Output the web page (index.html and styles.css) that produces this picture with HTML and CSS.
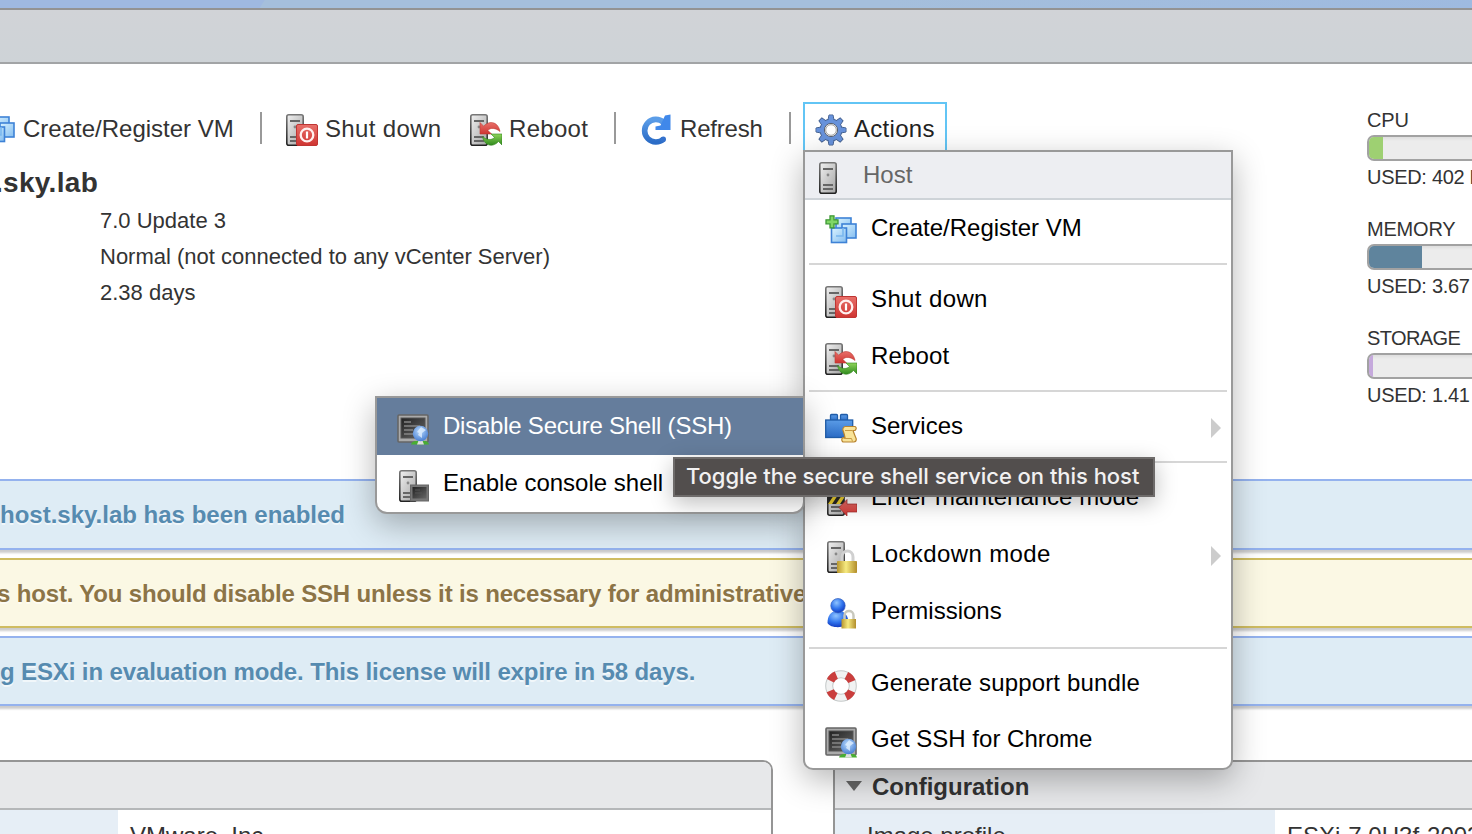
FILE: index.html
```html
<!DOCTYPE html>
<html lang="en">
<head>
<meta charset="utf-8">
<title>Host client</title>
<link rel="stylesheet" href="styles.css">
</head>
<body>
<svg class="defs" width="0" height="0" aria-hidden="true">
  <defs>
    <linearGradient id="metal" x1="0" y1="0" x2="1" y2="1"><stop offset="0" stop-color="#f0f0f0"/><stop offset="1" stop-color="#a4a4a4"/></linearGradient>
    <linearGradient id="edge" x1="0" y1="0" x2="0" y2="1"><stop offset="0" stop-color="#777"/><stop offset="1" stop-color="#222"/></linearGradient>
    <linearGradient id="red" x1="0" y1="0" x2="0" y2="1"><stop offset="0" stop-color="#e8706a"/><stop offset="1" stop-color="#cf3431"/></linearGradient>
    <linearGradient id="green" x1="0" y1="0" x2="0" y2="1"><stop offset="0" stop-color="#8fd45a"/><stop offset="1" stop-color="#2f8a1d"/></linearGradient>
    <linearGradient id="sky" x1="0" y1="0" x2="1" y2="1"><stop offset="0" stop-color="#d9f3ff"/><stop offset="1" stop-color="#84bdf0"/></linearGradient>
    <linearGradient id="blue" x1="0" y1="0" x2="0" y2="1"><stop offset="0" stop-color="#5b9de8"/><stop offset="1" stop-color="#2b6cc6"/></linearGradient>
    <linearGradient id="gold" x1="0" y1="0" x2="1" y2="0"><stop offset="0" stop-color="#b8962e"/><stop offset=".45" stop-color="#f6ea80"/><stop offset="1" stop-color="#b28d2b"/></linearGradient>
    <linearGradient id="screen" x1="0" y1="0" x2="1" y2="1"><stop offset="0" stop-color="#222"/><stop offset="1" stop-color="#666"/></linearGradient>
    <radialGradient id="person" cx=".4" cy=".3" r=".8"><stop offset="0" stop-color="#8fc4ff"/><stop offset=".5" stop-color="#3276ee"/><stop offset="1" stop-color="#092bb5"/></radialGradient>
    <radialGradient id="globe" cx=".45" cy=".35" r=".7"><stop offset="0" stop-color="#b9dafd"/><stop offset="1" stop-color="#3f78cf"/></radialGradient>

    <symbol id="tower" viewBox="0 0 18 32">
      <rect x=".8" y=".8" width="16.4" height="30.4" rx="2" fill="url(#metal)" stroke="url(#edge)" stroke-width="1.6"/>
      <path d="M4 7h10M4 23h10M4 27h10" stroke="#666" stroke-width="1.8"/>
      <circle cx="9" cy="13" r="1.4" fill="#888"/>
    </symbol>
    <symbol id="create" viewBox="0 0 32 32">
      <g fill="url(#sky)" stroke="#3e82d6" stroke-width="1.6">
        <rect x="11" y="3" width="15" height="15"/>
        <rect x="17" y="9" width="14" height="14"/>
        <rect x="6.500" y="13" width="15" height="14.500"/>
      </g>
      <path d="M18 13v8h-7" fill="none" stroke="#78b6ee" stroke-width="1.500"/>
      <path d="M5 .8h4v4h4v4H9v4H5v-4H1v-4h4z" fill="#80d765" stroke="#3d9834" stroke-width="1.3"/>
    </symbol>
    <symbol id="shutdown" viewBox="0 0 32 32">
      <use href="#tower" x="0" y="0" width="18" height="32"/>
      <rect x="10.500" y="10.500" width="21" height="21" rx="1.500" fill="url(#red)" stroke="#bf3533"/>
      <circle cx="21" cy="21" r="6.300" fill="none" stroke="#fff0ef" stroke-width="2.300"/>
      <path d="M21 17.500v7" stroke="#fff" stroke-width="2.200"/>
    </symbol>
    <symbol id="reboot" viewBox="0 0 32 32">
      <use href="#tower" x="0" y="0" width="18" height="32"/>
      <path d="M10 8.500V20h11.500l-3.700-3.700c3-3 8-2.300 12.200 1.200C28.500 8.500 20 5.500 13.700 12.200z" fill="url(#red)" stroke="#bd3a32" stroke-width=".6"/>
      <path d="M32 31V20H21l3.500 3.500c-3 3-8 2.500-12-1C14 31 22 34.500 28.500 27.500z" fill="url(#green)" stroke="#32841f" stroke-width=".6"/>
    </symbol>
    <symbol id="refresh" viewBox="0 0 32 32">
      <path d="M23.500 8.300A11.300 11.300 0 1 0 23.600 25" fill="none" stroke="url(#blue)" stroke-width="5.600"/>
      <circle cx="23.300" cy="25.200" r="2.700" fill="#3472cd"/>
      <path d="M25 1.500l5.500-1V16h-15v-3.500l5-1z" fill="#4088ea"/>
    </symbol>
    <symbol id="gear" viewBox="0 0 32 32">
      <g fill="#6792db" stroke="#45618f" stroke-width="1">
        <path id="teeth" d="M13 6l1-5h4l1 5v20l-1 5h-4l-1-5z"/>
        <use href="#teeth" transform="rotate(45 16 16)"/>
        <use href="#teeth" transform="rotate(90 16 16)"/>
        <use href="#teeth" transform="rotate(135 16 16)"/>
        <circle cx="16" cy="16" r="11"/>
      </g>
      <g fill="#6792db">
        <path id="core" d="M13.500 6l.9-4.500h3.200l.9 4.500v20l-.9 4.500h-3.200l-.9-4.500z"/>
        <use href="#core" transform="rotate(45 16 16)"/>
        <use href="#core" transform="rotate(90 16 16)"/>
        <use href="#core" transform="rotate(135 16 16)"/>
      </g>
      <circle cx="16" cy="16" r="6.600" fill="#fff" stroke="#5b6270" stroke-width="1"/>
      <circle cx="16" cy="16" r="5.300" fill="#fff" stroke="#8b8b8b" stroke-width=".8"/>
    </symbol>
    <symbol id="services" viewBox="0 0 32 32">
      <g fill="url(#blue)" stroke="#205da9" stroke-width="1.300">
        <path d="M5.500 8V2.500q0-1 1-1h5q1 0 1 1V8M15.500 8V2.500q0-1 1-1h5q1 0 1 1V8"/>
        <rect x=".7" y="7" width="27" height="17.500"/>
      </g>
      <path d="M20 13.500h10q2.500 1.500 0 4h-2q1 3 3.300 8.500 0 3-2.500 3H18q-2.500-2.500 0-4.500h2q-.5-3-2.300-8 .3-2.500 2.300-3z" fill="#f9e397" stroke="#b88430" stroke-width="1.200"/>
      <path d="M20 17.500h7M18.500 25.500h8l1 3" fill="none" stroke="#c99a42"/>
    </symbol>
    <symbol id="maintenance" viewBox="0 0 32 32">
      <use href="#tower" x="2" y="0" width="18" height="32"/>
      <path d="M2 8h17v12H2z" fill="#292929"/>
      <path d="M3 20l8-12h4L7 20zm8 0l8-12v6l-4 6z" fill="#f1d331"/>
      <path d="M14 23.500l8-8v4.500h10v8H22v4z" fill="url(#red)" stroke="#9d2929" stroke-width=".7"/>
    </symbol>
    <symbol id="lockdown" viewBox="0 0 32 32">
      <use href="#tower" x="2" y="0" width="18" height="32"/>
      <path d="M17 21v-5c0-8 11-8 11 0v5" fill="none" stroke="#d0d0d0" stroke-width="3"/>
      <rect x="12" y="20" width="20" height="12" rx=".8" fill="url(#gold)"/>
    </symbol>
    <symbol id="permissions" viewBox="0 0 32 32">
      <path d="M2.500 25c0-7 3-11 8-12h5c5 1 8 6 8 12-2 5-18 6-21 0z" fill="url(#person)"/>
      <circle cx="13" cy="7.700" r="7.200" fill="url(#person)" stroke="#3761bd" stroke-width=".7"/>
      <path d="M19.500 22v-4.500c0-6 9-6 9 0V22" fill="none" stroke="#c8c8bd" stroke-width="2.500"/>
      <rect x="16.500" y="21" width="14.500" height="9.500" fill="url(#gold)"/>
    </symbol>
    <symbol id="buoy" viewBox="0 0 32 32">
      <circle cx="16" cy="16" r="11.800" fill="none" stroke="#c5c9c9" stroke-width="8"/>
      <circle cx="16" cy="16" r="11.800" fill="none" stroke="#f1f2f2" stroke-width="6"/>
      <circle cx="16" cy="16" r="11.800" fill="none" stroke="#ca3e3d" stroke-width="7.800" stroke-dasharray="8.200 10.335" stroke-dashoffset="-5.200"/>
    </symbol>
    <symbol id="ssh" viewBox="0 0 32 32">
      <rect x="1" y="2" width="30" height="27" rx="1" fill="#aaa" stroke="#666" stroke-width="1.600"/>
      <rect x="4" y="5" width="24" height="20" fill="url(#screen)" stroke="#555"/>
      <path d="M7 9h7M7 13h16M7 17h9M7 21h10" stroke="#858585" stroke-width="1.600"/>
      <path d="M14 31.500q1-4 6-3.500h7q4-.5 5 3.500z" fill="#48ad32"/>
      <path d="M20 31.500l2-5h3l2 5z" fill="#ddd"/>
      <circle cx="23.500" cy="20.500" r="7.700" fill="url(#globe)"/>
      <path d="M24 14l-4 5 2 1-1 2 4 3v-5l4-3z" fill="#e4f2ff" opacity=".75"/>
    </symbol>
    <symbol id="console" viewBox="0 0 32 32">
      <use href="#tower" x="2" y="0" width="18" height="32"/>
      <rect x="13.500" y="15" width="18" height="16" fill="#777" stroke="#666"/>
      <rect x="15.500" y="17" width="14" height="11.500" fill="url(#screen)"/>
      <path d="M18 20h5M18 23h7" stroke="#555"/>
    </symbol>
  </defs>
</svg>

<div class="page">
  <div class="masthead"></div>
  <div class="tabbar"></div>

  <div class="summary">
    <div class="summary-main">
      <div class="toolbar">
        <div class="tool tool-create"><svg class="icon"><use href="#create"/></svg><span>Create/Register VM</span></div>
        <div class="divider"></div>
        <div class="tool tool-shutdown"><svg class="icon"><use href="#shutdown"/></svg><span>Shut down</span></div>
        <div class="tool tool-reboot"><svg class="icon"><use href="#reboot"/></svg><span>Reboot</span></div>
        <div class="divider"></div>
        <div class="tool tool-refresh"><svg class="icon"><use href="#refresh"/></svg><span>Refresh</span></div>
        <div class="divider"></div>
        <div class="tool tool-actions"><svg class="icon"><use href="#gear"/></svg><span>Actions</span></div>
      </div>
      <h1 class="host-name">.sky.lab</h1>
      <div class="facts">
        <div class="fact"><span>7.0 Update 3</span></div>
        <div class="fact"><span>Normal (not connected to any vCenter Server)</span></div>
        <div class="fact"><span>2.38 days</span></div>
      </div>
    </div>
    <div class="meters">
      <div class="meter"><div class="meter-text">CPU</div><div class="track"><div class="fill fill-cpu"></div></div><div class="meter-text used">USED: 402 MHz</div></div>
      <div class="meter"><div class="meter-text">MEMORY</div><div class="track"><div class="fill fill-memory"></div></div><div class="meter-text used">USED: 3.67 GB</div></div>
      <div class="meter"><div class="meter-text label-storage">STORAGE</div><div class="track"><div class="fill fill-storage"></div></div><div class="meter-text used">USED: 1.41 GB</div></div>
    </div>
  </div>

  <div class="alerts">
    <div class="alert info"><span class="alert-enabled">host.sky.lab has been enabled</span></div>
    <div class="alert warning"><span class="alert-ssh">s host. You should disable SSH unless it is necessary for administrative</span></div>
    <div class="alert info"><span class="alert-license">g ESXi in evaluation mode. This license will expire in 58 days.</span></div>
  </div>

  <div class="panels">
    <div class="panel panel-hardware">
      <div class="panel-head"></div>
      <div class="row"><div class="key"></div><div class="value">VMware, Inc.</div></div>
    </div>
    <div class="panel panel-config">
      <div class="panel-head"><svg class="caret" viewBox="0 0 16 10"><path d="M0 0h16L8 10z" fill="#666"/></svg><span>Configuration</span></div>
      <div class="row"><div class="key">Image profile</div><div class="value">ESXi-7.0U3f-20036589-standard</div></div>
    </div>
  </div>

  <div class="menu">
    <div class="menu-head"><svg class="host-icon"><use href="#tower"/></svg><span>Host</span></div>
    <div class="group"><div class="item"><svg class="icon"><use href="#create"/></svg><span>Create/Register VM</span></div></div>
    <div class="group">
      <div class="item"><svg class="icon"><use href="#shutdown"/></svg><span class="loose">Shut down</span></div>
      <div class="item"><svg class="icon"><use href="#reboot"/></svg><span class="support">Reboot</span></div>
    </div>
    <div class="group group-services"><div class="item"><svg class="icon"><use href="#services"/></svg><span>Services</span><i class="more"></i></div></div>
    <div class="group">
      <div class="item"><svg class="icon"><use href="#maintenance"/></svg><span>Enter maintenance mode</span></div>
      <div class="item"><svg class="icon"><use href="#lockdown"/></svg><span class="loose">Lockdown mode</span><i class="more"></i></div>
      <div class="item"><svg class="icon"><use href="#permissions"/></svg><span>Permissions</span></div>
    </div>
    <div class="group group-support">
      <div class="item"><svg class="icon"><use href="#buoy"/></svg><span class="support">Generate support bundle</span></div>
      <div class="item"><svg class="icon"><use href="#ssh"/></svg><span>Get SSH for Chrome</span></div>
    </div>
  </div>

  <div class="submenu">
    <div class="item selected"><svg class="icon"><use href="#ssh"/></svg><span>Disable Secure Shell (SSH)</span></div>
    <div class="item"><svg class="icon"><use href="#console"/></svg><span>Enable console shell</span></div>
  </div>

  <div class="tooltip">Toggle the secure shell service on this host</div>
</div>
</body>
</html>
```
FILE: styles.css
```css
* { box-sizing: border-box; }
body { margin: 0; background: #fff; }
.defs { display: block; position: absolute; }
.page {
  position: relative; width: 1472px; height: 834px; overflow: hidden;
  font-family: "Liberation Sans", Arial, sans-serif; font-size: 24px; color: #333; white-space: nowrap;
}
.masthead { height: 8px; background: linear-gradient(122deg, #9fb9e1 0 224px, #a5bfdc 225px 60%, #9ebae0); }
.tabbar { height: 56px; border-top: 2px solid #939393; border-bottom: 2px solid #a2a4a6; background: linear-gradient(#d1d3d7, #ced3d7); }
.icon { width: 32px; height: 32px; flex: none; display: block; }

.summary { display: flex; height: 415px; }
.summary-main { width: 1367px; flex: none; padding-top: 38px; }
.toolbar { display: flex; align-items: center; height: 54px; }
.tool { display: flex; align-items: center; flex: none; }
.tool .icon { position: relative; top: 1px; }
.tool-create { width: 277px; margin-left: -17px; gap: 8px; }
.tool-shutdown { width: 184px; margin-left: 24px; gap: 7px; letter-spacing: .35px; }
.tool-reboot { width: 144px; gap: 7px; letter-spacing: .3px; }
.tool-refresh { width: 149px; margin-left: 24px; gap: 8px; letter-spacing: -.2px; }
.tool-actions { width: 144px; height: 54px; margin-left: 12px; padding-left: 10px; gap: 7px; border: 2px solid #62c5f5; color: #222; letter-spacing: .3px; }
.divider { width: 2px; height: 32px; flex: none; background: #999; position: relative; top: -1px; }
.host-name { margin: 9px 0 0 -5px; height: 36px; line-height: 36px; font-size: 28px; font-weight: bold; letter-spacing: .3px; }
.facts { margin-top: 2px; padding-left: 100px; font-size: 22px; line-height: 36px; }
.fact { height: 36px; }

.meters { width: 105px; flex: none; padding-top: 45px; font-size: 20px; overflow: hidden; }
.meter { height: 109px; }
.meter-text { height: 22px; line-height: 22px; letter-spacing: -.2px; }
.used { letter-spacing: -.3px; }
.label-storage { letter-spacing: -.6px; }
.track { width: 240px; height: 26px; margin: 4px 0 5px; border: 2px solid #a2a2a2; border-radius: 7px; background: #ececec; overflow: hidden; box-shadow: inset 0 2px 3px rgba(0,0,0,.06); }
.fill { height: 100%; }
.fill-cpu { width: 14px; background: #9ed072; }
.fill-memory { width: 53px; background: #5f849d; }
.fill-storage { width: 4px; background: #c5a9dc; }

.alerts { display: flex; flex-direction: column; gap: 8px; margin: 0 -4px; font-weight: bold; }
.alert { height: 70px; padding: 2px 4px 0; line-height: 64px; border: 2px solid; box-shadow: 0 3px 2px rgba(0,0,0,.2); text-shadow: 0 2px 0 rgba(255,255,255,.6); }
.alert:first-child { height: 71px; }
.info { background: #deecf5; border-color: #94b2ee; color: #568bb0; }
.warning { background: #fbf8e4; border-color: #cfbc61; color: #8c7446; }
.alert span { display: block; }
.alert-enabled { margin-left: -2px; }
.alert-ssh { margin-left: -5px; letter-spacing: -.16px; }
.alert-license { margin-left: -2px; letter-spacing: -.12px; }

.panels { display: flex; gap: 60px; margin: 54px 0 0 -20px; }
.panel { flex: none; height: 120px; border: 2px solid #959595; border-radius: 10px; background: #fff; overflow: hidden; }
.panel-hardware { width: 793px; }
.panel-config { width: 700px; }
.panel-head { display: flex; align-items: center; height: 48px; border-bottom: 2px solid #b5b7b9; background: #e7e8ea; font-weight: bold; padding: 4px 0 0 11px; }
.caret { width: 16px; height: 10px; margin-right: 10px; position: relative; top: -1px; }
.row { display: flex; height: 54px; line-height: 52px; }
.key { flex: none; background: #e6eef6; padding-left: 32px; width: 440px; }
.panel-hardware .key { width: 136px; padding: 0; }
.value { padding-left: 12px; }

.menu, .submenu { position: absolute; border: 2px solid #999; background: #fff; color: #000; box-shadow: 0 10px 32px rgba(0,0,0,.29); }
.menu { left: 803px; top: 150px; width: 430px; height: 620px; border-radius: 0 0 10px 10px; }
.menu-head { display: flex; align-items: center; height: 48px; padding-left: 13px; border-bottom: 2px solid #ced3d8; background: #edeef2; color: #666; }
.host-icon { width: 20px; height: 32px; margin-right: 25px; position: relative; top: 3px; }
.group + .group { margin-top: 6px; }
.group + .group::before { content: ""; display: block; height: 2px; margin: 0 4px 6px; background: #d6d6d6; }
.group + .group-services { margin-top: 5px; }
.group + .group-support { margin-top: 7px; }
.item { display: flex; align-items: center; height: 57px; padding: 0 10px 2px 20px; gap: 14px; }
.item .icon { position: relative; top: 3px; }
.item .loose { letter-spacing: .38px; }
.item .support { letter-spacing: .15px; }
.group-support .item { height: 56px; }
.group-support .item:first-of-type { height: 57px; padding-bottom: 1px; }
.more { margin-left: auto; border: 10px solid transparent; border-left-color: #ccc; border-right: 0; position: relative; top: 2px; }
.submenu { left: 375px; top: 396px; width: 430px; height: 118px; border-radius: 0 0 12px 12px; overflow: hidden; }
.selected { background: #657d9c; color: #fff; letter-spacing: -.23px; }
.tooltip {
  position: absolute; left: 673px; top: 457px; width: 482px; height: 40px; padding-left: 11px; line-height: 35px;
  border: 2px solid #6e6b6a; background: #524e4d; color: #f2f1f1; font-family: Inter, sans-serif; font-size: 22px; font-weight: 500; letter-spacing: -.04px;
  box-shadow: 0 6px 22px rgba(0,0,0,.26);
}
```
